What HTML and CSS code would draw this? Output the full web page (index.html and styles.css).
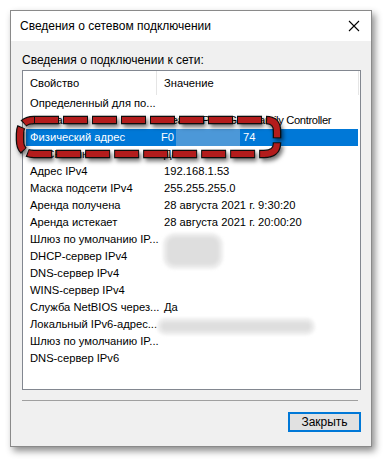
FILE: index.html
```html
<!DOCTYPE html>
<html lang="ru">
<head>
<meta charset="utf-8">
<link rel="stylesheet" href="styles.css">
</head>
<body>
<div class="window">
  <div class="titlebar">
    <span class="title">Сведения о сетевом подключении</span>
    <svg class="close" width="12" height="12" viewBox="0 0 12 12"><path d="M1 1 L11 11 M11 1 L1 11" stroke="#000" stroke-width="1.1" fill="none"/></svg>
  </div>
  <div class="content">
    <div class="caption">Сведения о подключении к сети:</div>
    <div class="list">
      <div class="row head"><div class="c1">Свойство</div><div class="c2 hsep">Значение</div></div>
      <div class="row"><div class="c1">Определенный для по...</div><div class="c2"></div></div>
      <div class="row"><div class="c1">Описание</div><div class="c2 tight">Realtek PCIe GbE Family Controller</div></div>
      <div class="row sel"><div class="c1">Физический адрес</div><div class="c2">F0<span class="mac"></span>74</div></div>
      <div class="row"><div class="c1">DHCP включен</div><div class="c2">Да</div></div>
      <div class="row"><div class="c1">Адрес IPv4</div><div class="c2">192.168.1.53</div></div>
      <div class="row"><div class="c1">Маска подсети IPv4</div><div class="c2">255.255.255.0</div></div>
      <div class="row"><div class="c1">Аренда получена</div><div class="c2">28 августа 2021 г. 9:30:20</div></div>
      <div class="row"><div class="c1">Аренда истекает</div><div class="c2">28 августа 2021 г. 20:00:20</div></div>
      <div class="row"><div class="c1">Шлюз по умолчанию IP...</div><div class="c2"><span class="blob blob1"></span></div></div>
      <div class="row"><div class="c1">DHCP-сервер IPv4</div><div class="c2"></div></div>
      <div class="row"><div class="c1">DNS-сервер IPv4</div><div class="c2"></div></div>
      <div class="row"><div class="c1">WINS-сервер IPv4</div><div class="c2"></div></div>
      <div class="row"><div class="c1">Служба NetBIOS через...</div><div class="c2">Да</div></div>
      <div class="row"><div class="c1">Локальный IPv6-адрес...</div><div class="c2"><span class="blob blob2"></span></div></div>
      <div class="row"><div class="c1">Шлюз по умолчанию IP...</div><div class="c2"></div></div>
      <div class="row"><div class="c1">DNS-сервер IPv6</div><div class="c2"></div></div>
    </div>
    <div class="sep"></div>
    <div class="actions"><button class="btn">Закрыть</button></div>
  </div>
</div>
<svg class="annot" width="300" height="70" viewBox="0 0 300 70">
  <defs>
    <filter id="sh" x="-10%" y="-30%" width="130%" height="170%">
      <feDropShadow dx="2" dy="3" stdDeviation="2" flood-color="#000" flood-opacity="0.55"/>
    </filter>
  </defs>
  <g filter="url(#sh)" fill="none" stroke-linejoin="round">
    <path d="M34 20 H266 Q277 20 277 31 V43 Q277 54 264 54 H34 Q20 54 20 40 V34 Q20 20 34 20 Z" stroke="#111" stroke-width="8.5" stroke-dasharray="25 4"/>
    <path d="M34 20 H266 Q277 20 277 31 V43 Q277 54 264 54 H34 Q20 54 20 40 V34 Q20 20 34 20 Z" stroke="#b31b1b" stroke-width="6" stroke-dasharray="23 6" stroke-dashoffset="-1"/>
  </g>
</svg>
</body>
</html>
```
FILE: styles.css
```css
html, body {
  margin: 0;
  padding: 0;
  background: #ffffff;
}
body {
  position: relative;
  width: 383px;
  height: 459px;
  overflow: hidden;
  font-family: "Liberation Sans", Arial, sans-serif;
  font-size: 12px;
  color: #000;
}
.window {
  margin: 10px 0 0 10px;
  width: 360px;
  height: 435px;
  border: 1px solid #8a8a8a;
  background: #f0f0f0;
  box-shadow: 3px 4px 7px rgba(0, 0, 0, 0.45);
  display: flex;
  flex-direction: column;
}
.titlebar {
  height: 30px;
  background: #ffffff;
  display: flex;
  align-items: center;
  justify-content: space-between;
  padding: 0 10px 0 9px;
  flex: none;
}
.title {
  font-size: 12px;
}
.close {
  display: block;
  margin-right: 1px;
}
.content {
  flex: 1;
  display: flex;
  flex-direction: column;
  padding: 0 10px 0 11px;
}
.caption {
  height: 29px;
  line-height: 14px;
  padding-top: 12px;
  box-sizing: border-box;
}
.list {
  height: 320px;
  box-sizing: border-box;
  border: 1px solid #828790;
  background: #ffffff;
  display: flex;
  flex-direction: column;
  overflow: hidden;
  font-size: 11.2px;
}
.row {
  display: flex;
  height: 17px;
  line-height: 17px;
  flex: none;
  white-space: nowrap;
}
.row.head {
  height: 24px;
  line-height: 24px;
}
.c1 {
  width: 127px;
  padding-left: 7px;
  flex: none;
  overflow: visible;
}
.c2 {
  width: 194px;
  padding-left: 7px;
  flex: none;
  position: relative;
}
.tight {
  letter-spacing: -0.35px;
}
.hsep {
  border-left: 1px solid #e5e5e5;
  margin-left: -1px;
  border-right: 1px solid #e5e5e5;
}
.row.sel {
  background: #0078d7;
  color: #ffffff;
  margin-left: 3px;
  width: 332px;
}
.row.sel .c1 {
  width: 124px;
  padding-left: 4px;
}
.mac {
  display: inline-block;
  width: 64px;
  height: 17px;
  vertical-align: top;
  margin-left: 2px;
  margin-right: 3px;
  background: #4c98d8;
  filter: blur(0.6px);
}
.blob {
  position: absolute;
  display: block;
  background: #dedede;
  border-radius: 8px;
  box-shadow: 0 0 0 4px #ececec;
  filter: blur(1.5px);
}
.blob1 {
  left: 10px;
  top: 6px;
  width: 52px;
  height: 28px;
}
.blob2 {
  left: 4px;
  top: 6px;
  width: 150px;
  height: 9px;
}
.sep {
  margin-top: 10px;
  height: 0;
  border-top: 1px solid #a0a0a0;
  width: 336px;
}
.actions {
  display: flex;
  justify-content: flex-end;
  padding-top: 11px;
}
.btn {
  width: 73px;
  height: 20px;
  box-sizing: border-box;
  border: 2px solid #0078d7;
  background: #e1e1e1;
  font-family: "Liberation Sans", Arial, sans-serif;
  font-size: 12px;
  color: #000;
  padding: 0;
  line-height: 16px;
}
.annot {
  position: absolute;
  left: 0;
  top: 100px;
}
```
